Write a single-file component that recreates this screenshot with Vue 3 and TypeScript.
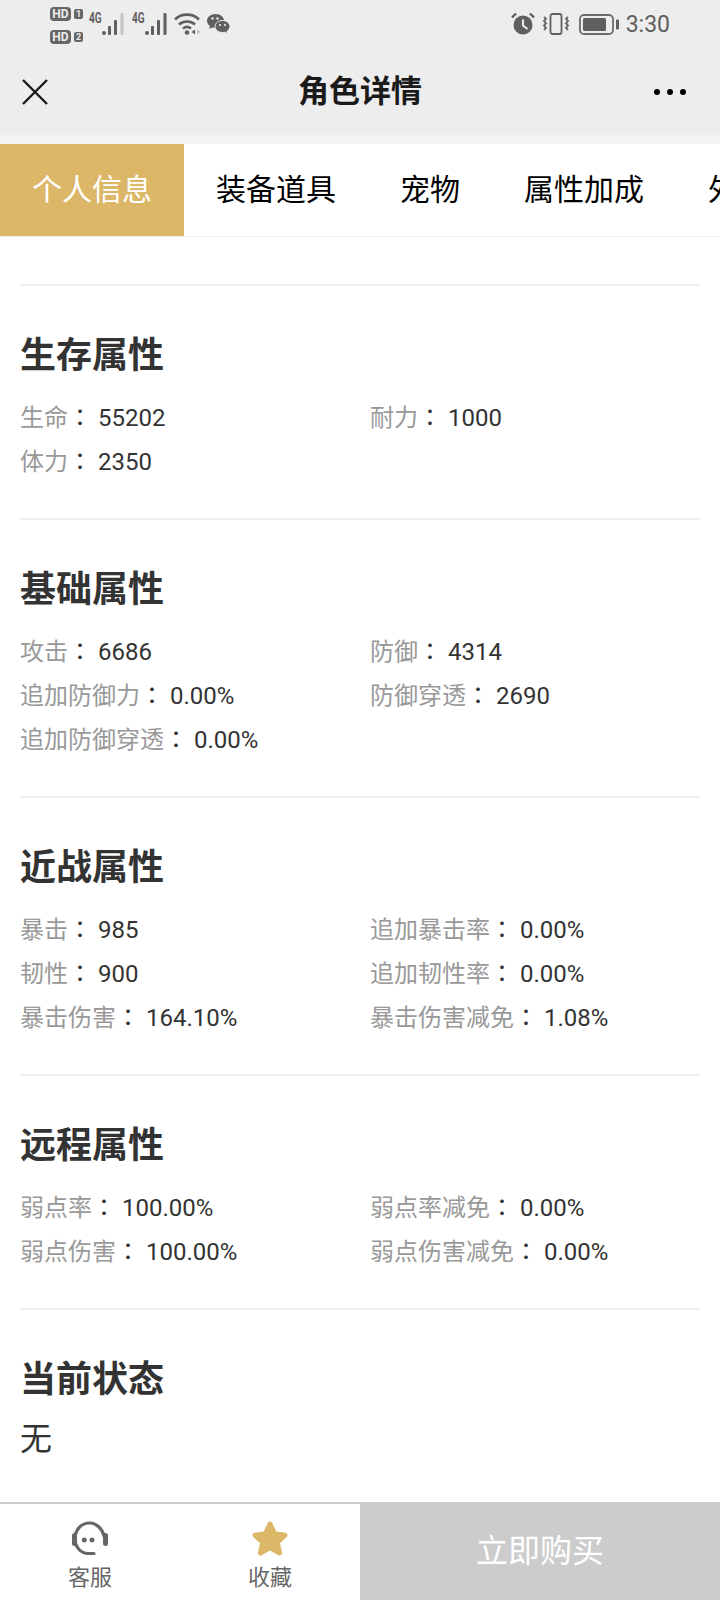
<template>
  <div class="page">
    <div class="status-bar">
      <div class="status-left">
        <div class="hd-stack">
          <div class="hd-line"><span class="hd">HD</span><span class="sim">1</span></div>
          <div class="hd-line"><span class="hd">HD</span><span class="sim">2</span></div>
        </div>
        <div v-for="(level, i) in signalLevels" :key="i" class="signal">
          <span class="net">4G</span>
          <svg width="22" height="22" viewBox="0 0 22 22">
            <circle cx="2" cy="20" r="2" fill="#5f5f5f" />
            <rect x="6" y="13" width="3" height="9" rx="1" fill="#5f5f5f" />
            <rect x="12" y="7" width="3" height="15" rx="1" fill="#5f5f5f" />
            <rect x="18.500" y="0" width="3" height="22" rx="1" :fill="level === 4 ? '#5f5f5f' : '#c4c4c4'" />
          </svg>
        </div>
        <svg class="wifi" width="28" height="22" viewBox="0 0 28 22" fill="none" stroke="#5f5f5f" stroke-width="2.600">
          <path d="M1 6.500C7.500 0 18.500 0 25 6.500" />
          <path d="M5 11.500C9.500 7.500 16.500 7.500 21 11.500" />
          <path d="M9 15.500C11.500 13.500 14.500 13.500 17 15.500" />
          <circle cx="13" cy="19.500" r="2.300" fill="#5f5f5f" stroke="none" />
          <path d="M21 16.500v5l-3.500-2.500z" fill="#5f5f5f" stroke="none" />
          <path d="M23 16.500v5l3.500-2.500z" fill="#bdbdbd" stroke="none" />
        </svg>
        <svg class="chat" width="23" height="20" viewBox="0 0 23 20">
          <path d="M8.500 0C3.800 0 0 3 0 6.800c0 2.200 1.200 4 3 5.300L2.200 15l3-1.600c1 .3 2.100.4 3.300.4 4.700 0 8.500-3 8.500-7S13.200 0 8.500 0z" fill="#5f5f5f" />
          <path d="M15.500 6.500c-4.200 0-7.500 2.700-7.500 6s3.300 6 7.500 6c.9 0 1.700-.1 2.500-.3l2.700 1.500-.7-2.500c1.800-1.100 3-2.800 3-4.700 0-3.300-3.300-6-7.500-6z" fill="#5f5f5f" stroke="#ededed" stroke-width="1" />
          <circle cx="5.500" cy="4.500" r="1.200" fill="#ededed" />
          <circle cx="10.500" cy="4.500" r="1.200" fill="#ededed" />
          <circle cx="13" cy="11" r="1.100" fill="#ededed" />
          <circle cx="18" cy="11" r="1.100" fill="#ededed" />
        </svg>
      </div>
      <div class="status-right">
        <svg class="alarm" width="24" height="23" viewBox="0 0 24 23">
          <circle cx="12" cy="13" r="9.500" fill="#5f5f5f" />
          <path d="M12 7.500V13.500l4.500 3.500" fill="none" stroke="#ededed" stroke-width="2" />
          <path d="M1 5.500l4-4M23 5.500l-4-4" stroke="#5f5f5f" stroke-width="2.400" />
        </svg>
        <svg class="vibrate" width="26" height="22" viewBox="0 0 26 22" fill="none" stroke="#5f5f5f">
          <rect x="7.500" y="1" width="11" height="20" rx="2" stroke-width="1.800" />
          <path d="M1 4l2 1.800L1 8l2 2.200L1 12.500l2 2.200L1 17" stroke-width="1.800" />
          <path d="M25 4l-2 1.800L25 8l-2 2.200 2 2.300-2 2.200 2 2.300" stroke-width="1.800" />
        </svg>
        <svg class="battery" width="40" height="21" viewBox="0 0 40 21">
          <rect x="1" y="1" width="33" height="19" rx="4" fill="none" stroke="#6b6b6b" stroke-width="1.800" />
          <rect x="4" y="4" width="23" height="13" rx="1.500" fill="#5f5f5f" />
          <rect x="37" y="5.500" width="3" height="10" rx="1" fill="#5f5f5f" />
        </svg>
        <span class="clock">3:30</span>
      </div>
    </div>

    <div class="nav-bar">
      <svg class="nav-close" width="28" height="28" viewBox="0 0 28 28">
        <path d="M2 2l24 24M26 2L2 26" stroke="#1a1a1a" stroke-width="2.400" />
      </svg>
      <span class="nav-title">角色详情</span>
      <div class="nav-more"><i></i><i></i><i></i></div>
    </div>
    <div class="nav-gap"></div>

    <div class="tabs">
      <div v-for="(tab, i) in tabs" :key="tab" class="tab" :class="{ active: i === 0 }">{{ tab }}</div>
    </div>

    <div class="content">
      <section v-for="group in groups" :key="group.title" class="group">
        <h2 class="group-title">{{ group.title }}</h2>
        <div class="attrs">
          <div v-for="attr in group.attrs" :key="attr.label" class="attr">
            <span class="attr-label">{{ attr.label }}</span><span class="attr-colon">：</span><span class="attr-value">{{ attr.value }}</span>
          </div>
        </div>
      </section>
      <section class="group">
        <h2 class="group-title">当前状态</h2>
        <p class="state">无</p>
      </section>
    </div>

    <div class="bottom-bar">
      <div class="bottom-item">
        <svg width="36" height="36" viewBox="0 0 36 36" fill="none" stroke="#666" stroke-width="3.200" stroke-linecap="round">
          <path d="M32 15C30 7 24 2 17.500 2 9 2 3 9 3 18c0 8 6 14.500 13 14.500h6" />
          <rect x="0" y="12" width="5" height="13" rx="2.500" fill="#666" stroke="none" />
          <rect x="31" y="12" width="5" height="13" rx="2.500" fill="#666" stroke="none" />
          <circle cx="12.300" cy="19" r="2.500" fill="#666" stroke="none" />
          <circle cx="20" cy="19" r="2.500" fill="#666" stroke="none" />
        </svg>
        <span>客服</span>
      </div>
      <div class="bottom-item">
        <svg width="36" height="36" viewBox="0 0 36 36">
          <polygon
            points="18,3 22.600,12.800 33,14.200 25.300,21.400 27.600,32 18,26.600 8.400,32 10.700,21.400 3,14.200 13.400,12.800"
            fill="#dcb767"
            stroke="#dcb767"
            stroke-width="5"
            stroke-linejoin="round"
          />
        </svg>
        <span>收藏</span>
      </div>
      <div class="buy">立即购买</div>
    </div>
  </div>
</template>

<script setup lang="ts">
interface Attr {
  label: string;
  value: string;
}

interface Group {
  title: string;
  attrs: Attr[];
}

const signalLevels = [3, 4];

const tabs = ['个人信息', '装备道具', '宠物', '属性加成', '外观'];

const groups: Group[] = [
  {
    title: '生存属性',
    attrs: [
      { label: '生命', value: '55202' },
      { label: '耐力', value: '1000' },
      { label: '体力', value: '2350' },
    ],
  },
  {
    title: '基础属性',
    attrs: [
      { label: '攻击', value: '6686' },
      { label: '防御', value: '4314' },
      { label: '追加防御力', value: '0.00%' },
      { label: '防御穿透', value: '2690' },
      { label: '追加防御穿透', value: '0.00%' },
    ],
  },
  {
    title: '近战属性',
    attrs: [
      { label: '暴击', value: '985' },
      { label: '追加暴击率', value: '0.00%' },
      { label: '韧性', value: '900' },
      { label: '追加韧性率', value: '0.00%' },
      { label: '暴击伤害', value: '164.10%' },
      { label: '暴击伤害减免', value: '1.08%' },
    ],
  },
  {
    title: '远程属性',
    attrs: [
      { label: '弱点率', value: '100.00%' },
      { label: '弱点率减免', value: '0.00%' },
      { label: '弱点伤害', value: '100.00%' },
      { label: '弱点伤害减免', value: '0.00%' },
    ],
  },
];
</script>

<style>
html,
body {
  margin: 0;
  background: #fff;
}
</style>

<style scoped>
.page {
  width: 720px;
  height: 1600px;
  display: flex;
  flex-direction: column;
  overflow: hidden;
  background: #fff;
  font-family: Roboto, "Noto Sans CJK SC", sans-serif;
}

.status-bar {
  height: 48px;
  flex: none;
  display: flex;
  justify-content: space-between;
  align-items: flex-start;
  padding: 0 50px 0 50px;
  background: #ededed;
  color: #5f5f5f;
}

.status-left,
.status-right {
  display: flex;
  align-items: flex-start;
}

.hd-stack {
  width: 39px;
  padding-top: 7px;
}

.hd-line {
  display: flex;
  align-items: center;
  gap: 3px;
  height: 14px;
  margin-bottom: 9px;
}

.hd {
  width: 21px;
  height: 14px;
  border-radius: 4px;
  background: #666;
  color: #ededed;
  font-size: 12px;
  font-weight: 700;
  line-height: 14px;
  text-align: center;
}

.sim {
  width: 9px;
  height: 10px;
  border-radius: 2px;
  background: #666;
  color: #ededed;
  font-size: 9px;
  font-weight: 700;
  line-height: 10px;
  text-align: center;
}

.signal {
  width: 43px;
  display: flex;
  align-items: flex-start;
  padding-top: 13px;
}

.signal svg {
  margin-left: 13px;
}

.net {
  display: block;
  width: 0;
  font-size: 14px;
  font-weight: 700;
  line-height: 11px;
  transform: scaleX(0.72);
  transform-origin: left center;
}

.wifi {
  margin-top: 13px;
  margin-left: -1px;
}

.chat {
  margin: 14px 0 0 5px;
}

.alarm {
  margin-top: 12px;
}

.vibrate {
  margin: 13px 0 0 8px;
}

.battery {
  margin: 14px 0 0 10px;
}

.clock {
  margin: 11px 0 0 7px;
  font-size: 23px;
  line-height: 28px;
}

.nav-bar {
  height: 87px;
  flex: none;
  display: flex;
  align-items: center;
  justify-content: space-between;
  position: relative;
  padding: 0 34px 0 21px;
  background: #ededed;
}

.nav-title {
  position: absolute;
  left: 0;
  right: 0;
  text-align: center;
  font-size: 31px;
  line-height: 44px;
  font-weight: 700;
  color: #1a1a1a;
}

.nav-more {
  display: flex;
  gap: 7px;
}

.nav-more i {
  width: 6px;
  height: 6px;
  border-radius: 50%;
  background: #000;
}

.nav-gap {
  height: 9px;
  flex: none;
  background: #f3f3f3;
}

.tabs {
  height: 92px;
  flex: none;
  display: flex;
  border-bottom: 1px solid #eee;
  background: #fff;
}

.tab {
  flex: none;
  padding: 0 32px;
  font-size: 30px;
  line-height: 92px;
  color: #000;
}

.tab.active {
  background: #dcb767;
  color: #fff;
}

.content {
  flex: 1;
  padding: 47px 20px 0;
}

.group {
  border-top: 2px solid #eee;
  padding-top: 44px;
}

.group-title {
  margin: 0;
  font-size: 36px;
  line-height: 52px;
  font-weight: 700;
  color: #333;
}

.attrs {
  display: grid;
  grid-template-columns: 350px 1fr;
  padding: 12px 0 36px;
}

.attr {
  height: 44px;
  font-size: 24px;
  line-height: 44px;
  white-space: nowrap;
}

.attr-label {
  color: #999;
}

.attr-colon {
  color: #333;
  font-family: "Noto Sans CJK TC", sans-serif;
}

.attr-value {
  margin-left: 6px;
  color: #333;
}

.state {
  margin: 0;
  padding-top: 9px;
  font-size: 32px;
  line-height: 48px;
  color: #333;
}

.bottom-bar {
  height: 98px;
  flex: none;
  display: flex;
  background: #fff;
}

.bottom-item {
  width: 180px;
  display: flex;
  flex-direction: column;
  align-items: center;
  padding-top: 17px;
  border-top: 2px solid #ccc;
  box-sizing: border-box;
  font-size: 22px;
  line-height: 30px;
  color: #666;
}

.bottom-item span {
  margin-top: 6px;
}

.buy {
  flex: 1;
  background: #ccc;
  color: #fff;
  font-size: 32px;
  line-height: 98px;
  text-align: center;
}
</style>
